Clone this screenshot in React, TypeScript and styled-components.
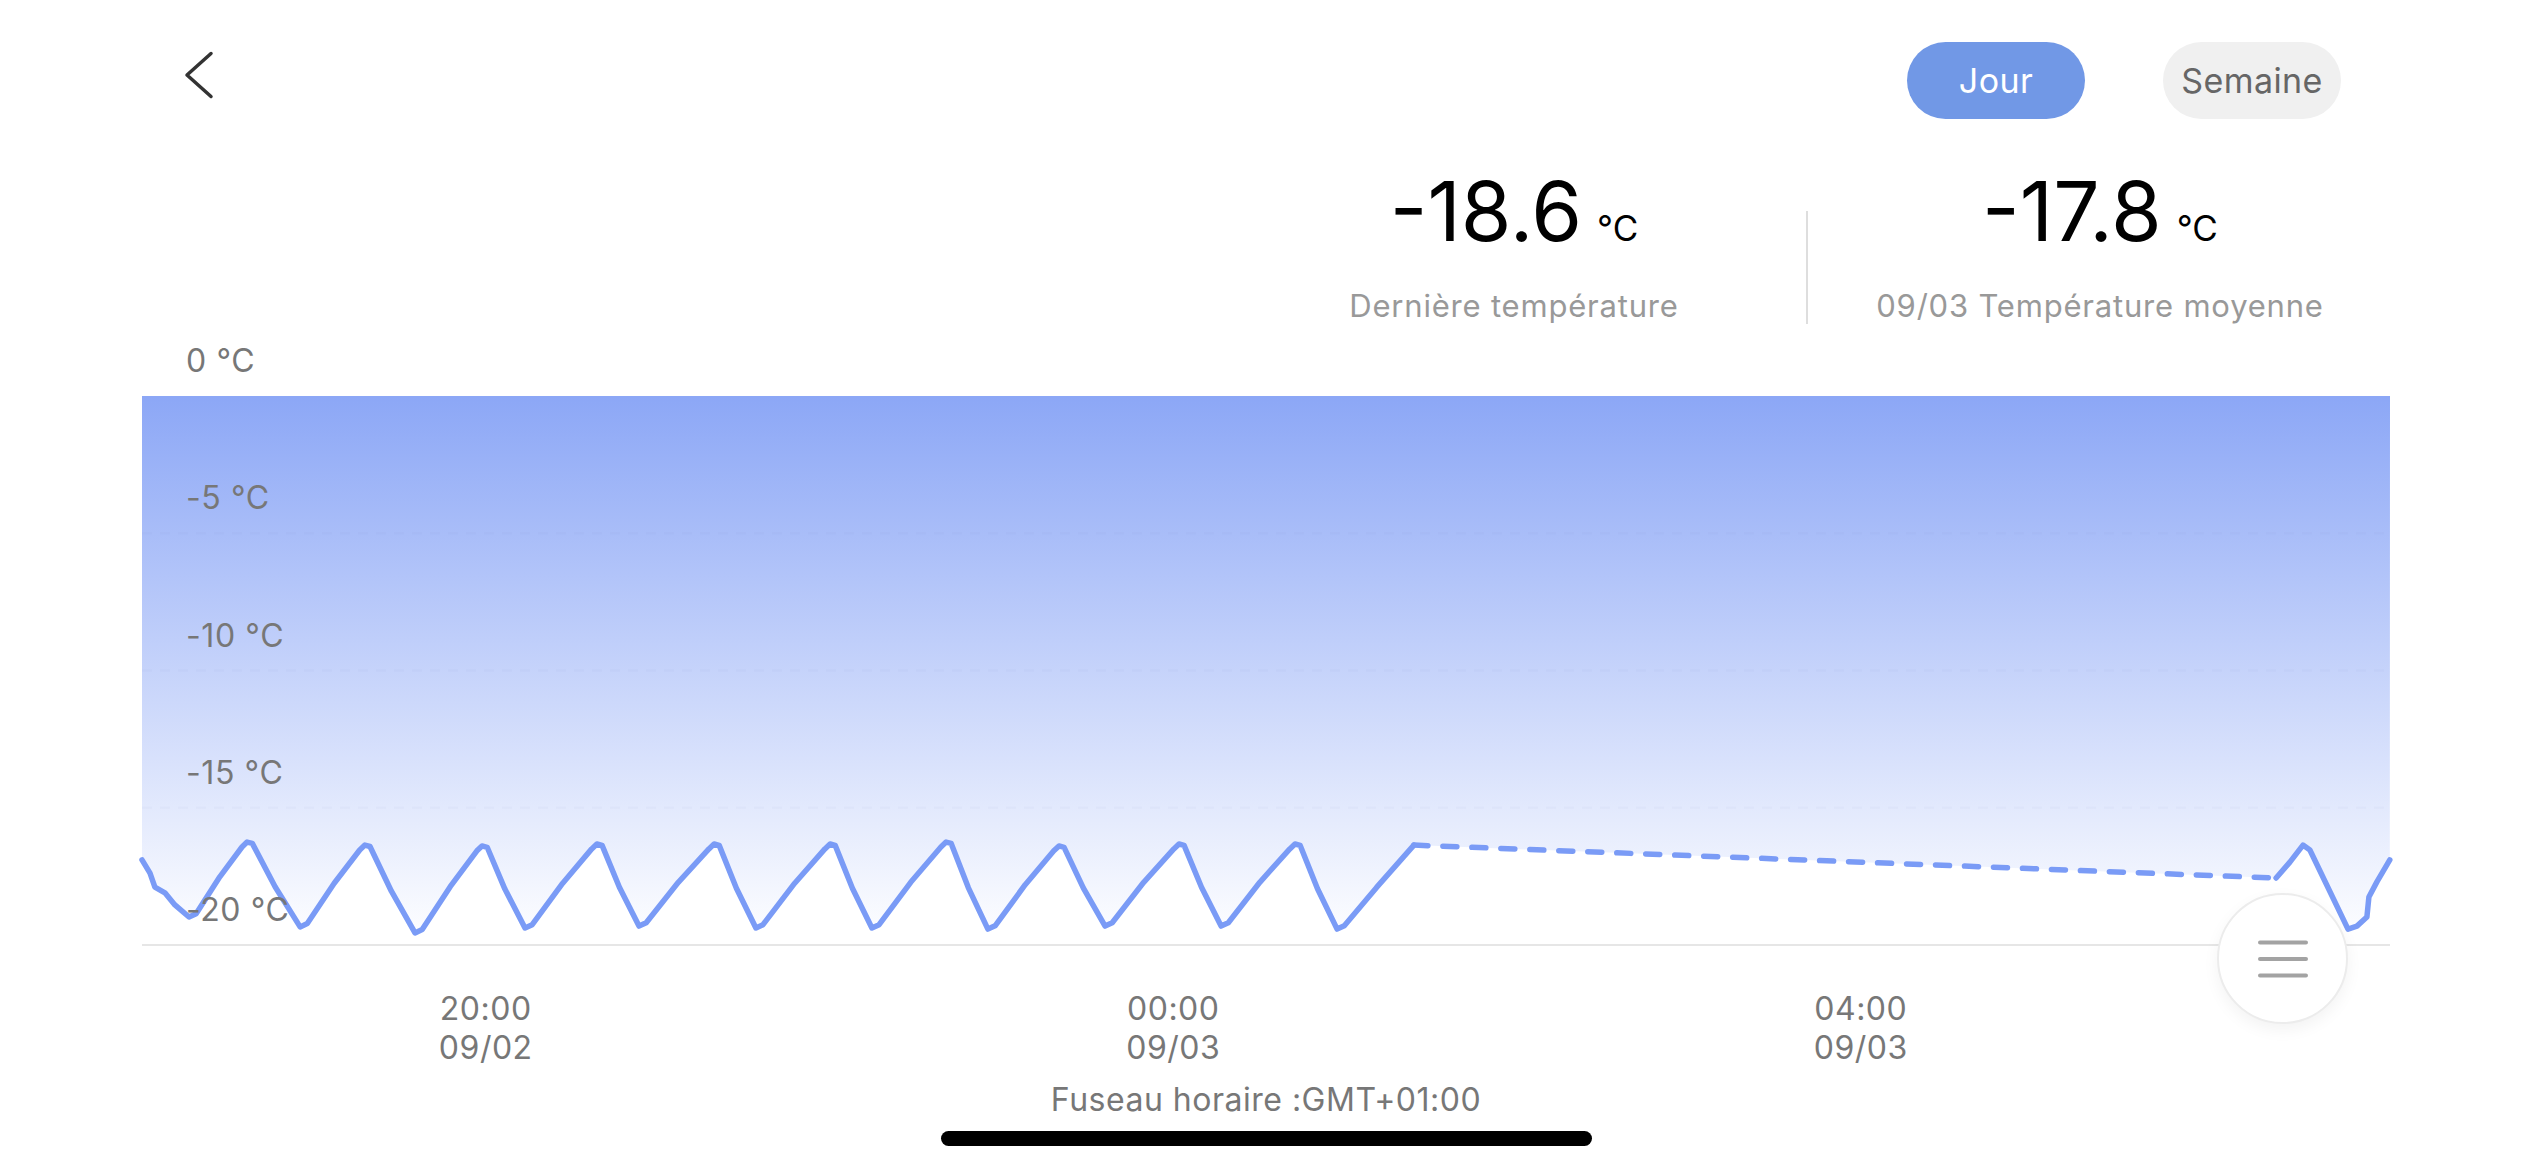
import React from 'react';
import styled, { createGlobalStyle } from 'styled-components';

const GlobalStyle = createGlobalStyle`
  html, body {
    margin: 0;
    padding: 0;
    background: #fff;
  }

  body {
    font-family: Inter, "Noto Sans", "Liberation Sans", sans-serif;
    -webkit-font-smoothing: antialiased;
  }
`;

// chart geometry: 0 °C at the top, -20 °C at the axis line, 18:00 at the left edge
const CHART_W = 2248;
const CHART_H = 549;
const PX_PER_MIN = 171.875 / 60;
const PX_PER_DEG = CHART_H / 20;

const xOf = (min: number) => min * PX_PER_MIN;
const yOf = (temp: number) => -temp * PX_PER_DEG;

type Reading = [number, number]; // minutes after 18:00, °C

const troughs: Reading[] = [
  [16.4, -18.98], [55.2, -19.34], [95.3, -19.56], [133.7, -19.38], [173.5, -19.31],
  [214.3, -19.38], [254.8, -19.38], [295.3, -19.42], [336.2, -19.31], [376.7, -19.31],
  [417.2, -19.42],
];

const peaks: Reading[] = [
  [36.7, -16.25], [77.8, -16.36], [118.7, -16.39], [158.8, -16.32], [199.7, -16.32],
  [240.2, -16.32], [280.7, -16.25], [320.1, -16.39], [362.0, -16.32], [402.5, -16.32],
];

const buildNight = (): Reading[] => {
  const out: Reading[] = [
    [0, -16.9], [2.8, -17.38], [4.5, -17.89], [8, -18.1], [11.5, -18.54],
  ];
  troughs.forEach(([tt, tv], i) => {
    out.push([tt, tv], [tt + 2.5, tv + 0.12]);
    const pk = peaks[i];
    if (!pk) return;
    const [pt, pv] = pk;
    out.push([(tt + pt) / 2 + 0.6, (tv + pv) / 2 + 0.1]);
    out.push([pt - 1.8, pv - 0.18], [pt, pv], [pt + 1.8, pv - 0.05]);
    const next = troughs[i + 1];
    out.push([(pt + next[0]) / 2 + 0.5, (pv + next[1]) / 2 - 0.08]);
  });
  out.push([431, -17.9], [444, -16.36]);
  return out;
};

const night = buildNight();
const morning: Reading[] = [
  [745, -17.56], [749.8, -16.98], [754.4, -16.36], [756.8, -16.54], [770.1, -19.42],
  [773.2, -19.31], [776.7, -18.98], [777.4, -18.25], [780.2, -17.7], [784.7, -16.9],
];

const toPath = (pts: Reading[]) =>
  pts.map(([t, v], i) => `${i ? 'L' : 'M'}${xOf(t).toFixed(1)},${yOf(v).toFixed(1)}`).join(' ');

const areaPath = `${toPath([...night, ...morning])} L${CHART_W},0 L0,0 Z`;
const gapStart = night[night.length - 1];
const gapEnd = morning[0];

const yTicks = [0, -5, -10, -15, -20];

const xTicks = [
  { time: '20:00', date: '09/02' },
  { time: '00:00', date: '09/03' },
  { time: '04:00', date: '09/03' },
];

const Page = styled.div`
  position: relative;
  width: 2532px;
  height: 1170px;
  overflow: hidden;
  display: flex;
  flex-direction: column;
`;

const TopBar = styled.div`
  display: flex;
  align-items: flex-start;
  justify-content: space-between;
  padding: 42px 191px 0 184px;
`;

const BackIcon = styled.svg`
  width: 30px;
  height: 50px;
  margin-top: 8px;
`;

const Segments = styled.div`
  display: flex;
  gap: 78px;
`;

const SegmentButton = styled.button<{ $active?: boolean }>`
  width: 178px;
  height: 77px;
  border: none;
  border-radius: 39px;
  padding: 0;
  font-family: inherit;
  font-size: 34px;
  letter-spacing: 0.4px;
  background: ${(p) => (p.$active ? '#7198e6' : '#f0f0f0')};
  color: ${(p) => (p.$active ? '#fff' : '#666')};
`;

const StatsRow = styled.div`
  display: flex;
  justify-content: flex-end;
  padding-right: 140px;
  margin-top: 54px;
`;

const StatBlock = styled.div`
  width: 584px;
  display: flex;
  flex-direction: column;
  align-items: center;
`;

const ValueLine = styled.div`
  display: flex;
  align-items: baseline;
  color: #000;
`;

const Value = styled.span`
  font-size: 82px;
  line-height: 78px;
`;

const Unit = styled.span`
  font-size: 35px;
  margin-left: 15px;
`;

const StatLabel = styled.div`
  margin-top: 37px;
  font-size: 31px;
  line-height: 36px;
  letter-spacing: 0.8px;
  color: #999;
`;

const Divider = styled.div`
  width: 2px;
  height: 113px;
  align-self: flex-end;
  background: #dedede;
`;

const ChartBox = styled.div`
  position: relative;
  height: ${CHART_H}px;
  margin: 72px 142px 0;
`;

const ChartSvg = styled.svg`
  display: block;
  overflow: visible;
`;

const TickLabel = styled.span`
  position: absolute;
  left: 44px;
  font-size: 32px;
  line-height: 38px;
  letter-spacing: 0.6px;
  color: #777;
  white-space: nowrap;
`;

const XAxis = styled.div`
  display: grid;
  grid-template-columns: repeat(3, 687.5px);
  margin: 44px 0 0 142px;
`;

const XTick = styled.div`
  display: flex;
  flex-direction: column;
  align-items: center;
  font-size: 32px;
  line-height: 39px;
  letter-spacing: 0.5px;
  color: #777;
`;

const TimeZone = styled.div`
  margin-top: 14px;
  text-align: center;
  font-size: 32px;
  line-height: 38px;
  letter-spacing: 0.5px;
  color: #777;
`;

const HomeIndicator = styled.div`
  align-self: center;
  width: 651px;
  height: 15px;
  margin-top: 12px;
  border-radius: 8px;
  background: #000;
`;

const MenuFab = styled.button`
  position: absolute;
  left: 2217px;
  top: 893px;
  width: 131px;
  height: 131px;
  padding: 0;
  border-radius: 50%;
  border: 2px solid #ececec;
  background: #fff;
  box-shadow: 0 6px 16px rgba(0, 0, 0, 0.05);
  display: flex;
  align-items: center;
  justify-content: center;
`;

const Stat = ({ value, label }: { value: string; label: string }) => (
  <StatBlock>
    <ValueLine>
      <Value>{value}</Value>
      <Unit>°C</Unit>
    </ValueLine>
    <StatLabel>{label}</StatLabel>
  </StatBlock>
);

const TemperatureChart = () => (
  <ChartBox>
    <ChartSvg width={CHART_W} height={CHART_H} viewBox={`0 0 ${CHART_W} ${CHART_H}`}>
      <defs>
        <linearGradient id="fill" x1="0" y1="0" x2="0" y2={CHART_H} gradientUnits="userSpaceOnUse">
          <stop offset="0" stopColor="#8ca7f6" />
          <stop offset="1" stopColor="#ffffff" />
        </linearGradient>
      </defs>
      <path d={areaPath} fill="url(#fill)" />
      {[-5, -10, -15].map((v) => (
        <line
          key={v}
          x1={0}
          x2={CHART_W}
          y1={yOf(v)}
          y2={yOf(v)}
          stroke="rgba(80, 100, 170, 0.03)"
          strokeWidth={2}
          strokeDasharray="10 8"
        />
      ))}
      <line x1={0} x2={CHART_W} y1={CHART_H} y2={CHART_H} stroke="#e6e6e6" strokeWidth={2} />
      <g fill="none" stroke="#7a9bf6" strokeWidth={5.5} strokeLinejoin="round" strokeLinecap="round">
        <path d={toPath(night)} />
        <path d={toPath([gapStart, gapEnd])} strokeDasharray="14 15" />
        <path d={toPath(morning)} />
      </g>
    </ChartSvg>
    {yTicks.map((v) => (
      <TickLabel key={v} style={{ top: yOf(v) - 54 }}>
        {v} °C
      </TickLabel>
    ))}
  </ChartBox>
);

export default function App() {
  return (
    <>
      <GlobalStyle />
      <Page>
        <TopBar>
          <BackIcon viewBox="0 0 30 50">
            <polyline
              points="27,3.5 3,25 27,46.5"
              fill="none"
              stroke="#333"
              strokeWidth={3.5}
              strokeLinecap="round"
              strokeLinejoin="round"
            />
          </BackIcon>
          <Segments>
            <SegmentButton $active>Jour</SegmentButton>
            <SegmentButton>Semaine</SegmentButton>
          </Segments>
        </TopBar>

        <StatsRow>
          <Stat value="-18.6" label="Dernière température" />
          <Divider />
          <Stat value="-17.8" label="09/03 Température moyenne" />
        </StatsRow>

        <TemperatureChart />

        <XAxis>
          {xTicks.map((t) => (
            <XTick key={t.time}>
              <span>{t.time}</span>
              <span>{t.date}</span>
            </XTick>
          ))}
        </XAxis>

        <TimeZone>Fuseau horaire :GMT+01:00</TimeZone>
        <HomeIndicator />

        <MenuFab aria-label="menu">
          <svg width="50" height="40" viewBox="0 0 50 40">
            <g stroke="#a3a3a3" strokeWidth={4} strokeLinecap="round">
              <line x1="2" y1="3.5" x2="48" y2="3.5" />
              <line x1="2" y1="20" x2="48" y2="20" />
              <line x1="2" y1="36.5" x2="48" y2="36.5" />
            </g>
          </svg>
        </MenuFab>
      </Page>
    </>
  );
}
